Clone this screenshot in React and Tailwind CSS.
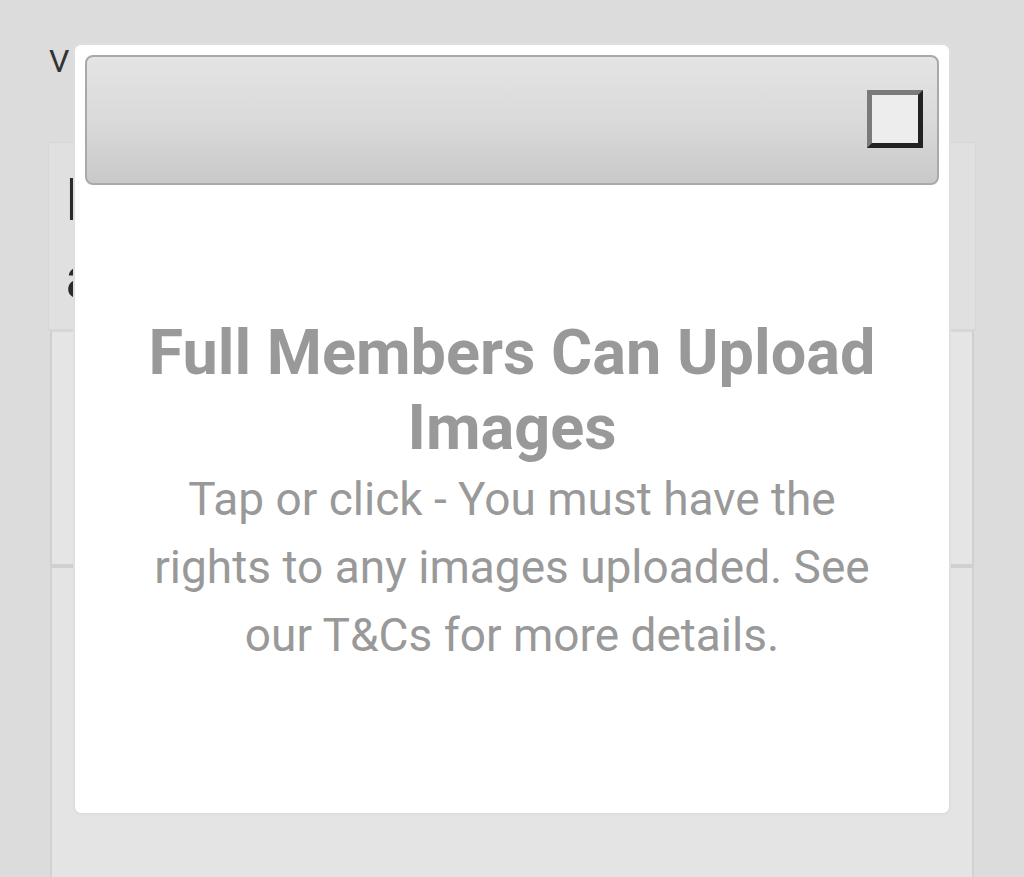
import React from "react";

const CloseBox = () => (
  <button className="w-[56px] h-[58px] border-[5px] border-t-[#7a7a7a] border-l-[#7a7a7a] border-b-[#222] border-r-[#222] bg-[#ededed]" />
);

const App = () => {
  return (
    <div className="relative w-full h-[877px] overflow-hidden bg-[#dcdcdc] font-['Roboto',sans-serif]">
      {/* page behind the modal */}
      <div className="pl-[48px] pr-[48px] pt-[41px]">
        <div className="text-[32px] leading-[40px] text-[#333] pl-[1px]">V</div>
        <div className="mt-[61px] h-[188px] bg-[#e0e0e0] border border-[#d6d6d6] px-[16px] pt-[18px] text-[60px] leading-[78px] text-[#2b2b2b]">
          <div>Lorem</div>
          <div>about</div>
        </div>
        <div className="mx-[2px] h-[238px] bg-[#e5e5e5] border-x-2 border-t-2 border-b-4 border-[#d0d0d0] border-t-[#d6d6d6]" />
        <div className="mx-[2px] h-[320px] bg-[#e4e4e4] border-x-2 border-[#d2d2d2]" />
      </div>

      {/* modal */}
      <div className="absolute left-[73px] top-[43px] w-[878px] h-[772px] bg-white border-2 border-[#dedede] rounded-[8px] p-[10px] flex flex-col">
        <div className="h-[130px] rounded-[8px] border-2 border-[#a9a9a9] bg-gradient-to-b from-[#e4e4e4] via-[#dadada] to-[#c9c9c9] flex items-center justify-end pr-[14px] pb-[2px]">
          <CloseBox />
        </div>
        <div className="flex-1 flex flex-col items-center pt-[130px] px-[62px] text-center text-[#999]">
          <h2 className="font-bold text-[63px] leading-[75px]">Full Members Can Upload Images</h2>
          <p className="text-[46px] leading-[68px]">
            Tap or click - You must have the rights to any images uploaded. See our T&amp;Cs for more details.
          </p>
        </div>
      </div>
    </div>
  );
};

export default App;
